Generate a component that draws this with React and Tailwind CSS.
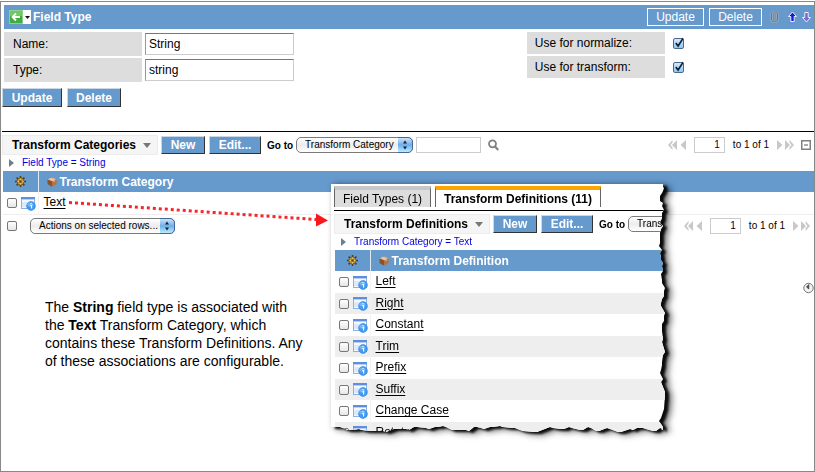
import React from "react";

const RIGHT_TEAR = [
  [0, 3], [4, 2], [9, 4], [14, 6], [19, 3], [26, 2], [31, 4], [36, 5], [42, 3], [49, 6], [59, 6],
  [66, 4], [73, 5], [79, 3], [87, 3], [96, 4], [104, 1], [112, 2], [119, 5], [129, 1], [137, 2],
  [144, 4], [155, 3], [168, 1], [178, 4], [186, 5], [195, 3], [208, 1], [225, 2], [234, 5], [243, 3],
];

const BOTTOM_TEAR = [
  [337, 2], [332, 3], [325, 1], [315, 3], [309, 4], [302, 2], [290, 0], [279, 3], [268, 1], [260, 4],
  [252, 2], [241, 4], [233, 3], [222, 4], [206, 0], [192, 1], [184, 4], [172, 5], [162, 5], [153, 3],
  [146, 5], [138, 1], [124, 2], [115, 5], [107, 5], [98, 3], [86, 5], [78, 2], [66, 3], [55, 0],
  [43, 1], [31, 2], [20, 2], [12, 4], [3, 5], [0, 5],
];

function tornShape() {
  const points = ["0px 0px"];
  RIGHT_TEAR.forEach(([y, inset], i) => {
    points.push(`calc(100% - ${inset}px) ${y}px`);
    points.push(`calc(100% - ${inset + (i % 3)}px) ${y + 3}px`);
  });
  BOTTOM_TEAR.forEach(([x, inset], i) => {
    const left = Math.min(x, 333);
    points.push(`${left}px calc(100% - ${inset}px)`);
    points.push(`${Math.max(left - 3, 0)}px calc(100% - ${inset + (i % 2)}px)`);
  });
  return `polygon(${points.join(", ")})`;
}

function InfoIcon() {
  return (
    <svg width="15" height="15" viewBox="0 0 15 15" className="shrink-0">
      <rect x="0.5" y="1.5" width="13" height="11" fill="#f4f8fe" stroke="#8db1e4" />
      <rect x="0" y="1" width="14" height="2" fill="#5b90de" />
      <rect x="1" y="3" width="12" height="1" fill="#b7d0f2" />
      <rect x="1" y="6" width="6" height="5" fill="#dce9fa" />
      <circle cx="10" cy="10" r="4.4" fill="#3f9bf3" stroke="#2f7fd8" strokeWidth="0.6" />
      <ellipse cx="9.3" cy="8.4" rx="3" ry="2" fill="#6fb5f8" />
      <path d="M9.4 9.600h1.200v3M10 7v1.300" fill="none" stroke="#fff" strokeWidth="1.100" />
    </svg>
  );
}

function GearIcon() {
  return (
    <svg width="11" height="11" viewBox="0 0 11 11" className="mx-auto block">
      <g stroke="#4a3a1c" strokeWidth="1.5">
        <path d="M5.5 0v11M0 5.5h11M1.6 1.6l7.8 7.8M9.4 1.6L1.6 9.4" />
      </g>
      <circle cx="5.5" cy="5.5" r="3.6" fill="#c9962f" stroke="#6b5222" strokeWidth="0.8" />
      <path d="M5.5 2.5v6M2.5 5.5h6" stroke="#f2d37c" strokeWidth="0.8" />
      <circle cx="5.5" cy="5.5" r="1.3" fill="#5b4318" />
    </svg>
  );
}

function CubeIcon() {
  return (
    <svg width="10" height="11" viewBox="0 0 10 11" className="shrink-0">
      <path d="M5 1.500L9.600 3.300 5.200 5.500 0.400 3.500z" fill="#e9b184" />
      <path d="M0.400 3.500L5.200 5.500v5.200L0.600 8.300z" fill="#8a5228" />
      <path d="M9.600 3.300L5.200 5.500v5.200l4.300-2.600z" fill="#bb7038" />
      <path d="M2.600 2.500l4.600 2v1.500" fill="none" stroke="#f7dcc3" strokeWidth="0.8" />
    </svg>
  );
}

function SmallCheckbox({ label }) {
  return (
    <input
      type="checkbox"
      aria-label={label}
      className="block size-[10px] shrink-0 appearance-none rounded-[2px] border border-[#777] bg-linear-to-b from-white to-[#e6e6e6]"
    />
  );
}

function CheckedBox({ id }) {
  return (
    <span className="relative block size-[11px]">
      <input
        id={id}
        type="checkbox"
        defaultChecked
        className="block size-[11px] appearance-none rounded-[2px] border border-[#49698f] bg-linear-to-b from-[#d3e8fb] to-[#8cc8f5]"
      />
      <svg width="12" height="12" viewBox="0 0 12 12" className="pointer-events-none absolute -top-px left-0">
        <path d="M2.8 6l2.3 3L10 1.4" fill="none" stroke="#111c2e" strokeWidth="1.7" />
      </svg>
    </span>
  );
}

function ActionButton({ children, className = "" }) {
  return (
    <button
      type="button"
      className={
        "shrink-0 border border-t-[#c9d9ea] border-r-[#333] border-b-[#333] border-l-[#c9d9ea] bg-[#6699cc] text-center text-xs leading-4 font-bold text-white " +
        className
      }
    >
      {children}
    </button>
  );
}

function AquaSelect({ label, option, className }) {
  return (
    <span className={"relative block shrink-0 " + className}>
      <select
        aria-label={label}
        className="block h-4 w-full appearance-none rounded-[5px] border border-[#7a7a7a] bg-linear-to-b from-white via-[#ececec] to-white pl-2 text-[10px] leading-3 text-black"
      >
        <option>{option}</option>
      </select>
      <svg
        width="15"
        height="16"
        viewBox="0 0 15 16"
        className="pointer-events-none absolute top-0 right-0"
      >
        <defs>
          <linearGradient id="aqua" x1="0" y1="0" x2="0" y2="1">
            <stop offset="0" stopColor="#d4e6fa" />
            <stop offset="0.5" stopColor="#6daeea" />
            <stop offset="1" stopColor="#c3f0ff" />
          </linearGradient>
        </defs>
        <path d="M0 0.5h10a4.5 4.5 0 0 1 4.500 4.500v6a4.500 4.500 0 0 1-4.500 4.500H0z" fill="url(#aqua)" />
        <path d="M0 0.5h10a4.500 4.500 0 0 1 4.500 4.500v6a4.500 4.500 0 0 1-4.500 4.500H0" fill="none" stroke="#44679b" />
        <path d="M7 3.500l2 3H5zM7 12.500l2-3H5z" fill="#16202e" />
      </svg>
    </span>
  );
}

function Pager({ name }) {
  return (
    <div className="flex shrink-0 items-center text-[10px] leading-4">
      <button type="button" aria-label="First page" className="mr-[3px]">
        <svg width="9" height="10" viewBox="0 0 9 10" className="block" fill="#c8c8c8">
          <path d="M4.500 0v2.500L2.500 5l2 2.500V10L0 5zM9 0v10L4 5z" />
        </svg>
      </button>
      <button type="button" aria-label="Previous page">
        <svg width="6" height="10" viewBox="0 0 6 10" className="block" fill="#c8c8c8">
          <path d="M6 0v10L0.500 5z" />
        </svg>
      </button>
      <input
        aria-label={name}
        defaultValue="1"
        className="mx-2 h-4 w-[31px] border border-[#ccc] pr-1 text-right text-[#000040]"
      />
      <span>to 1 of 1</span>
      <button type="button" aria-label="Next page" className="mr-0.5 ml-2">
        <svg width="6" height="10" viewBox="0 0 6 10" className="block" fill="#c8c8c8">
          <path d="M0 0v10l5.500-5z" />
        </svg>
      </button>
      <button type="button" aria-label="Last page">
        <svg width="9" height="10" viewBox="0 0 9 10" className="block" fill="#c8c8c8">
          <path d="M0 0v10l5-5zM4.500 0v2.500l2 2.500-2 2.500V10L9 5z" />
        </svg>
      </button>
    </div>
  );
}

function ListToolbar({ title, field, children }) {
  return (
    <div className="flex h-5 items-center">
      <h2 className="flex h-5 w-[156px] shrink-0 items-center justify-between border border-[#ececec] bg-[#f5f5f5] pr-1.5 pl-[9px] text-xs font-bold whitespace-nowrap">
        {title}
        <svg width="8" height="5" viewBox="0 0 8 5">
          <path d="M0 0h8L4 5z" fill="#777" />
        </svg>
      </h2>
      <ActionButton className="ml-[3px] w-11">New</ActionButton>
      <ActionButton className="ml-1 w-[52px]">Edit...</ActionButton>
      <span className="mr-[3px] ml-1.5 shrink-0 text-[10px] font-bold">Go to</span>
      <AquaSelect label={"Go to field in " + title} option={field} className="w-[117px]" />
      {children}
    </div>
  );
}

function Breadcrumb({ children }) {
  return (
    <div className="flex h-4 items-center pl-[7px] text-[10px] leading-3">
      <svg width="5" height="8" viewBox="0 0 5 8" className="mr-2">
        <path d="M0 0l5 4-5 4z" fill="#6c7f8c" />
      </svg>
      <a href="#filter" className="text-[#0000dd]">
        {children}
      </a>
    </div>
  );
}

function RecordTable({ column, rows }) {
  return (
    <table className="w-full table-fixed border-collapse text-left text-xs leading-4">
      <thead>
        <tr className="h-[21px] bg-[#6699cc] text-white">
          <th className="w-[35px] border-r border-[#dfe9f4] p-0">
            <GearIcon />
          </th>
          <th className="p-0 pl-2 font-bold">
            <span className="flex items-center gap-[3px]">
              <CubeIcon />
              {column}
            </span>
          </th>
        </tr>
      </thead>
      <tbody>
        {rows.map((row) => (
          <tr key={row} className="odd:h-[22px] even:h-[21px] even:bg-[#eeeeee]">
            <td className="border-r border-[#f2f2f2] p-0 pl-1">
              <span className="flex items-center gap-1">
                <SmallCheckbox label={"Select " + row} />
                <InfoIcon />
              </span>
            </td>
            <td className="p-0 pb-0.5 pl-[5px]">
              <a href="#record" className="block underline underline-offset-2">
                {row}
              </a>
            </td>
          </tr>
        ))}
      </tbody>
    </table>
  );
}

function FieldLabel({ htmlFor, children, className }) {
  return (
    <label
      htmlFor={htmlFor}
      className={"flex w-[138px] shrink-0 items-center bg-[#dddddd] text-xs " + className}
    >
      {children}
    </label>
  );
}

function TextField({ id, label, value }) {
  return (
    <div className="flex h-6 items-center gap-[3px]">
      <FieldLabel htmlFor={id} className="h-6 pl-[9px]">
        {label}
      </FieldLabel>
      <input
        id={id}
        defaultValue={value}
        className="h-[22px] w-[149px] border border-[#ccc] border-t-[#777] border-l-[#999] bg-white pl-[3px] text-xs"
      />
    </div>
  );
}

function FormHeader() {
  return (
    <header className="flex h-6 items-center bg-[#6699cc] pr-[3px] pl-[5px] text-xs text-white">
      <button type="button" aria-label="Back" className="flex h-[14px] w-[22px] items-center bg-white">
        <svg width="22" height="14" viewBox="0 0 22 14">
          <rect x="0.500" y="0.500" width="13" height="13" fill="#3fae3a" stroke="#8fd08b" />
          <rect x="1" y="1" width="12" height="5" fill="#6cc964" />
          <path d="M11 7H4M7 3.500L3.500 7 7 10.500" fill="none" stroke="#fff" strokeWidth="1.800" />
          <path d="M16 6h5l-2.500 3z" fill="#111" />
        </svg>
      </button>
      <h1 className="ml-0.5 font-bold">Field Type</h1>
      <div className="ml-auto flex items-center">
        <button type="button" className="h-[18px] w-[57px] border border-white">
          Update
        </button>
        <button type="button" className="ml-[5px] h-[18px] w-[53px] border border-white">
          Delete
        </button>
        <button type="button" aria-label="Attachments" className="ml-2">
          <svg width="9" height="12" viewBox="0 0 9 12" className="block" fill="none">
            <path d="M1.500 2.500v5.500a3 3 0 0 0 6 0V2.500a1.800 1.800 0 0 0-3.600 0v5.800" stroke="#a9b4bd" strokeWidth="2" />
            <path d="M1.500 2.500v5.500a3 3 0 0 0 6 0V2.500a1.800 1.800 0 0 0-3.600 0v5.800" stroke="#66747f" strokeWidth="1" />
          </svg>
        </button>
        <button type="button" aria-label="Previous record" className="ml-[9px]">
          <svg width="9" height="12" viewBox="0 0 9 12" className="block">
            <path d="M4.500 1L8.500 5.500H6.200v5H2.800v-5H0.500z" fill="#1616e0" stroke="#e8edff" />
          </svg>
        </button>
        <button type="button" aria-label="Next record" className="ml-[5px]">
          <svg width="9" height="12" viewBox="0 0 9 12" className="block">
            <path d="M4.500 11L8.500 6.500H6.200v-5H2.800v5H0.500z" fill="#7a68c4" stroke="#e8edff" />
          </svg>
        </button>
      </div>
    </header>
  );
}

function DefinitionsPanel() {
  return (
    <div className="absolute top-[184px] left-[331px] z-10 [filter:drop-shadow(4px_2px_1px_rgba(0,0,0,0.9))_drop-shadow(3px_1px_3px_rgba(0,0,0,0.6))]">
      <div
        className="h-[248px] w-[335px] overflow-hidden bg-white pt-0.5 pl-[3px]"
        style={{ clipPath: tornShape() }}
      >
        <div className="mb-[3px] flex gap-1 text-xs leading-4">
          <button
            type="button"
            className="h-[21px] w-[97px] border-t-4 border-r border-l border-t-[#c8c8c8] border-r-[#666] border-l-[#666] bg-[#dddddd]"
          >
            Field Types (1)
          </button>
          <button
            type="button"
            className="h-[21px] w-[166px] border-t-4 border-r border-l border-t-[#ffa500] border-r-[#666] border-l-[#666] bg-white font-bold"
          >
            Transform Definitions (11)
          </button>
        </div>
        <section className="border-t border-black pt-[3px]">
          <ListToolbar title="Transform Definitions" field="Transform Definition" />
          <Breadcrumb>Transform Category = Text</Breadcrumb>
          <div className="ml-px">
            <RecordTable
              column="Transform Definition"
              rows={["Left", "Right", "Constant", "Trim", "Prefix", "Suffix", "Change Case", "Rotate"]}
            />
          </div>
        </section>
      </div>
    </div>
  );
}

function PointerArrow() {
  return (
    <svg
      width="264"
      height="34"
      viewBox="0 0 264 34"
      className="pointer-events-none absolute top-[197px] left-[66px] z-20"
    >
      <path d="M3 5.500L250 22.500" stroke="#f8262a" strokeWidth="3" strokeDasharray="3 3" />
      <path d="M250 16.500L262 23.500 250 29.500z" fill="#f8181c" />
    </svg>
  );
}

export default function App() {
  return (
    <div className="relative flex min-h-screen flex-col bg-white pt-px font-['Liberation_Sans',Arial,sans-serif] text-black">
      <main className="flex-1 border border-[#888] pt-[3px]">
        <div className="ml-[3px]">
          <FormHeader />
          <div className="mt-[3px] grid grid-cols-[minmax(0,1.82fr)_minmax(0,1fr)]">
            <div className="flex flex-col gap-0.5">
              <TextField id="name" label="Name:" value="String" />
              <TextField id="type" label="Type:" value="string" />
            </div>
            <div className="flex flex-col gap-0.5">
              <div className="flex items-center gap-2">
                <FieldLabel htmlFor="normalize" className="h-[22px] pl-2">
                  Use for normalize:
                </FieldLabel>
                <CheckedBox id="normalize" />
              </div>
              <div className="flex items-center gap-2">
                <FieldLabel htmlFor="transform" className="h-[22px] pl-2">
                  Use for transform:
                </FieldLabel>
                <CheckedBox id="transform" />
              </div>
            </div>
          </div>
        </div>

        <div className="mt-1.5 ml-px flex gap-[5px]">
          <ActionButton className="h-[19px] w-[60px]">Update</ActionButton>
          <ActionButton className="h-[19px] w-[54px]">Delete</ActionButton>
        </div>

        <section className="mt-6 ml-px border-t border-black pt-[3px]">
          <ListToolbar title="Transform Categories" field="Transform Category">
            <input
              aria-label="Search text"
              className="ml-[3px] h-4 w-[65px] shrink-0 border border-[#ccc] text-[10px]"
            />
            <button type="button" aria-label="Search" className="ml-[7px]">
              <svg width="11" height="12" viewBox="0 0 11 12" className="block">
                <circle cx="4.500" cy="4.800" r="3.500" fill="none" stroke="#808080" strokeWidth="1.800" />
                <path d="M7 7.500l3.300 3.500" stroke="#808080" strokeWidth="2.200" />
              </svg>
            </button>
            <div className="ml-auto flex items-center gap-[7px] pr-[3px]">
              <Pager name="First row" />
              <button type="button" aria-label="Collapse list">
                <svg width="10" height="10" viewBox="0 0 10 10" className="block">
                  <rect x="0.750" y="0.750" width="8.500" height="8.500" fill="#fff" stroke="#808080" strokeWidth="1.500" />
                  <path d="M3 5h4" stroke="#555" />
                </svg>
              </button>
            </div>
          </ListToolbar>
          <Breadcrumb>Field Type = String</Breadcrumb>
          <div className="ml-px">
            <RecordTable column="Transform Category" rows={["Text"]} />
          </div>
          <div className="ml-px flex h-[22px] items-center border-t border-[#eeeeee] pr-1 pl-1">
            <SmallCheckbox label="Select all rows" />
            <AquaSelect
              label="Actions on selected rows"
              option="Actions on selected rows..."
              className="ml-[13px] w-[145px]"
            />
            <div className="ml-auto">
              <Pager name="First row, lower pager" />
            </div>
          </div>
        </section>

        <div className="mt-[46px] flex items-start">
          <p className="mt-4 ml-11 text-sm leading-[18px]">
            The <b>String</b> field type is associated with
            <br />
            the <b>Text</b> Transform Category, which
            <br />
            contains these Transform Definitions. Any
            <br />
            of these associations are configurable.
          </p>
          <button type="button" aria-label="Show timing" className="ml-auto">
            <svg width="11" height="12" viewBox="0 0 11 12" className="block">
              <circle cx="5.500" cy="6" r="4.700" fill="#f3f3f3" stroke="#777" />
              <path d="M5.800 2.500v4.500L3.500 5z" fill="#444" stroke="#444" strokeWidth="0.800" />
            </svg>
          </button>
        </div>
      </main>

      <DefinitionsPanel />
      <PointerArrow />
    </div>
  );
}
